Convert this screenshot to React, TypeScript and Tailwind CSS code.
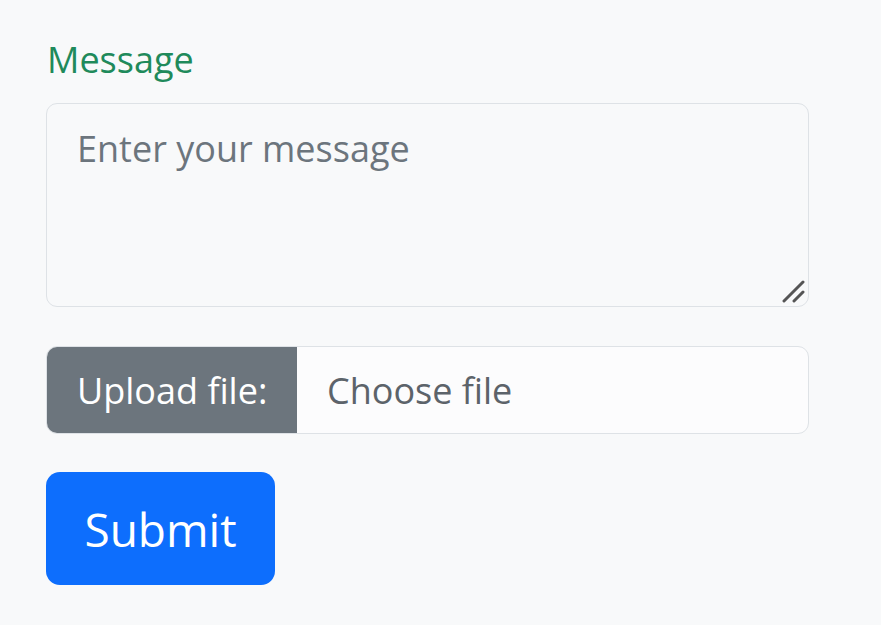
import React from "react";

export default function App() {
  return (
    <div
      className="min-h-[625px] w-full bg-[#f8f9fa] pl-[46px] pt-[33px]"
      style={{ fontFamily: '"Open Sans", "Noto Sans", sans-serif' }}
    >
      <div className="w-[763px]">
        <label className="block text-[36px] leading-[54px] text-[#1f8a5b] pl-[1px]">Message</label>
        <div className="relative mt-[16px]">
          <textarea
            className="block h-[204px] w-full resize-none rounded-[11px] border border-[#dee2e6] bg-[#f8f9fa] pl-[30px] pr-[28px] pt-[18px] text-[36px] leading-[54px] text-[#212529] outline-none placeholder:text-[#6c757d]"
            placeholder="Enter your message"
          />
          <svg className="pointer-events-none absolute right-[4px] bottom-[4px]" width="24" height="24" viewBox="0 0 24 24">
            <line x1="3" y1="22" x2="22" y2="3" stroke="#555" strokeWidth="3" strokeLinecap="round" />
            <line x1="13" y1="22" x2="22" y2="13" stroke="#555" strokeWidth="3" strokeLinecap="round" />
          </svg>
        </div>
        <div className="mt-[39px] flex h-[88px] overflow-hidden rounded-[11px] border border-[#dee2e6] bg-[#fcfcfd]">
          <div className="flex w-[251px] items-center bg-[#6c757d] pl-[31px] pt-[2px] text-[36px] leading-[54px] text-white -my-[1px] -ml-[1px]">
            Upload file:
          </div>
          <div className="flex items-center pl-[30px] pt-[2px] text-[36px] leading-[54px] text-[#5c636a]">Choose file</div>
        </div>
        <button className="mt-[38px] flex h-[113px] w-[229px] items-center justify-center rounded-[14px] bg-[#0d6efd] text-[46px] leading-[60px] text-white">
          Submit
        </button>
      </div>
    </div>
  );
}
